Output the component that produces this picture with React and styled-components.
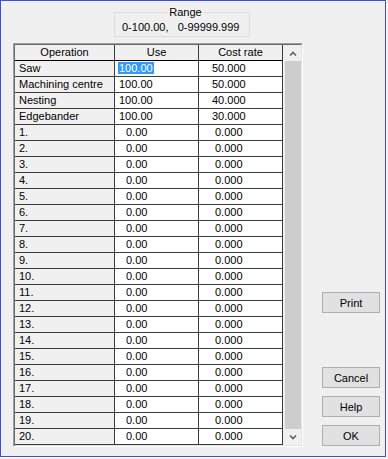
import React from "react";
import styled, { createGlobalStyle } from "styled-components";

const GlobalStyle = createGlobalStyle`
  html, body {
    margin: 0;
    padding: 0;
    background: #f7f7f7;
  }
  body {
    font-family: "Liberation Sans", Arial, sans-serif;
    font-size: 11px;
    color: #000;
  }
`;

const Dialog = styled.div`
  width: 384px;
  height: 455px;
  border: 1px solid #3f4fd6;
  background: #f0f0f0;
  display: flex;
`;

const LeftSide = styled.div`
  display: flex;
  flex-direction: column;
  padding: 5px 0 0 12px;
`;

const RangeBox = styled.fieldset`
  margin: 0 0 6px 101px;
  padding: 2px 0 2px 7px;
  width: 127px;
  border: 1px solid #dcdcdc;
  line-height: 13px;

  legend {
    margin: 0 auto;
    padding: 0 2px;
    line-height: 13px;
  }
`;

const Frame = styled.div`
  width: 288px;
  height: 402px;
  border-top: 1px solid #a0a0a0;
  border-left: 1px solid #a0a0a0;
  border-right: 1px solid #ffffff;
  border-bottom: 1px solid #ffffff;
`;

const Inner = styled.div`
  width: 286px;
  height: 400px;
  border-top: 1px solid #696969;
  border-left: 1px solid #696969;
  border-right: 1px solid #e3e3e3;
  border-bottom: 1px solid #e3e3e3;
  display: flex;
`;

const Grid = styled.div`
  display: grid;
  grid-template-columns: 100px 84px 84px;
  grid-auto-rows: 16px;
  align-content: start;
`;

const Cell = styled.div`
  box-sizing: border-box;
  border-right: 1px solid #3c3c3c;
  border-bottom: 1px solid ${(p) => (p.$head ? "#000" : "#3c3c3c")};
  background: ${(p) => (p.$grey ? "#f0f0f0" : "#ffffff")};
  text-align: ${(p) => (p.$head ? "center" : "left")};
  padding-left: ${(p) => p.$indent || 0}px;
  line-height: 15px;
  white-space: nowrap;
  overflow: hidden;
`;

const Selected = styled.span`
  background: #3399ff;
  color: #fff;
  padding: 0 1px;
  margin-left: -1px;
`;

const ScrollBar = styled.div`
  margin-left: 2px;
  width: 16px;
  display: flex;
  flex-direction: column;
`;

const ScrollArrow = styled.div`
  height: 16px;
  display: flex;
  align-items: center;
  justify-content: center;
  background: #f0f0f0;
`;

const Track = styled.div`
  flex: 1;
  background: #cdcdcd;
`;

const RightSide = styled.div`
  display: flex;
  flex-direction: column;
  margin-left: 19px;
  padding-top: 291px;
`;

const Button = styled.button`
  width: 58px;
  height: 21px;
  margin: 0 0 ${(p) => p.$gap || 8}px 0;
  padding: 0;
  border: 1px solid #adadad;
  background: #e1e1e1;
  font-family: "Liberation Sans", Arial, sans-serif;
  font-size: 11px;
  color: #000;
`;

const Chevron = ({ up }) => (
  <svg width="8" height="5" viewBox="0 0 8 5">
    <polyline
      points={up ? "1,4.5 4,1.5 7,4.5" : "1,0.5 4,3.5 7,0.5"}
      fill="none"
      stroke="#606060"
      strokeWidth="1.6"
    />
  </svg>
);

const rows = [
  ["Saw", "100.00", "50.000"],
  ["Machining centre", "100.00", "50.000"],
  ["Nesting", "100.00", "40.000"],
  ["Edgebander", "100.00", "30.000"],
  ...Array.from({ length: 20 }, (_, i) => [`${i + 1}.`, "0.00", "0.000"]),
];

export default function App() {
  return (
    <>
      <GlobalStyle />
      <Dialog>
        <LeftSide>
          <RangeBox>
            <legend>Range</legend>
            0-100.00,&nbsp;&nbsp;&nbsp;0-99999.999
          </RangeBox>
          <Frame>
            <Inner>
              <Grid>
                <Cell $head $grey>Operation</Cell>
                <Cell $head $grey>Use</Cell>
                <Cell $head $grey>Cost rate</Cell>
                {rows.map(([op, use, cost], i) => {
                  const named = i < 4;
                  return (
                    <React.Fragment key={op}>
                      <Cell $grey $indent={4}>{op}</Cell>
                      <Cell $indent={named ? 4 : 11}>
                        {i === 0 ? <Selected>{use}</Selected> : use}
                      </Cell>
                      <Cell $indent={named ? 13 : 16}>{cost}</Cell>
                    </React.Fragment>
                  );
                })}
              </Grid>
              <ScrollBar>
                <ScrollArrow>
                  <Chevron up />
                </ScrollArrow>
                <Track />
                <ScrollArrow>
                  <Chevron />
                </ScrollArrow>
              </ScrollBar>
            </Inner>
          </Frame>
        </LeftSide>
        <RightSide>
          <Button $gap={54}>Print</Button>
          <Button>Cancel</Button>
          <Button>Help</Button>
          <Button>OK</Button>
        </RightSide>
      </Dialog>
    </>
  );
}
